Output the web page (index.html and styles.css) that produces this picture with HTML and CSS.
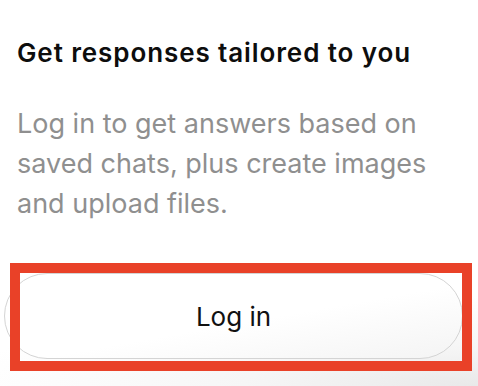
FILE: index.html
```html
<!DOCTYPE html>
<html lang="en">
<head>
<meta charset="utf-8">
<link rel="stylesheet" href="styles.css">
</head>
<body>
<main class="sheet">
  <h1 class="title">Get responses tailored to you</h1>
  <p class="desc">Log in to get answers based on saved chats, plus create images and upload files.</p>
  <div class="action">
    <button class="login">Log in</button>
    <div class="highlight"></div>
  </div>
</main>
</body>
</html>
```
FILE: styles.css
```css
html, body {
  margin: 0;
  padding: 0;
  width: 478px;
  height: 386px;
  overflow: hidden;
}
body {
  background: radial-gradient(ellipse 520px 90px at 100% 100%, #e9e9e9 0%, #f6f6f6 45%, #ffffff 100%);
  font-family: "Inter", "Noto Sans", sans-serif;
}
.sheet {
  display: flex;
  flex-direction: column;
  padding-top: 38px;
}
.title {
  margin: 0 0 0 17px;
  font-size: 26px;
  line-height: 30px;
  font-weight: 600;
  letter-spacing: 0.9px;
  color: #0d0d0d;
}
.desc {
  margin: 36px 0 0 17px;
  width: 450px;
  font-size: 27px;
  line-height: 40px;
  font-weight: 400;
  color: #8f8f8f;
}
.action {
  position: relative;
  margin-top: 49px;
  margin-left: 4px;
  width: 459px;
}
.login {
  display: block;
  width: 459px;
  height: 86px;
  border: 1.5px solid #d4d4d4;
  border-radius: 43px;
  background: linear-gradient(170deg, #ffffff 55%, #f4f4f4 100%);
  font-family: "Inter", "Noto Sans", sans-serif;
  font-size: 26px;
  font-weight: 400;
  color: #111111;
  padding: 0;
}
.highlight {
  position: absolute;
  left: 6px;
  top: -10px;
  width: 442px;
  height: 88px;
  border: 10px solid #e94128;
}
```
